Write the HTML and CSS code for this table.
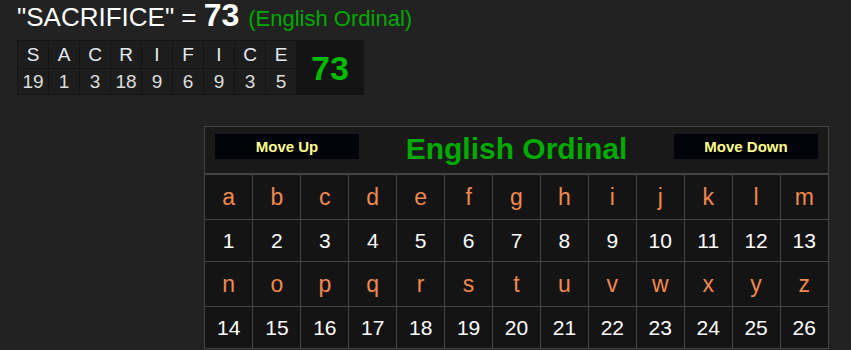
FILE: index.html
```html
<!DOCTYPE html>
<html lang="en">
<head>
  <meta charset="UTF-8" />
  <title>SACRIFICE = 73 | Gematria</title>
  <link rel="stylesheet" href="styles.css">
</head>
<body>
  <div class="page">
    <h1 class="phrase-title">
      <span class="phrase">"SACRIFICE" = </span><span class="phrase-total">73</span>
      <span class="cipher-label">(English Ordinal)</span>
    </h1>

    <table class="breakdown" id="breakdown">
      <tr class="bd-letters"></tr>
      <tr class="bd-values"></tr>
    </table>

    <div class="cipher-panel">
      <div class="cipher-head">
        <button class="move-btn">Move Up</button>
        <span class="cipher-name">English Ordinal</span>
        <button class="move-btn">Move Down</button>
      </div>
      <table class="cipher-grid" id="cipher-grid"></table>
    </div>
  </div>

  <script>
    const word = 'SACRIFICE';
    const ordinal = ch => ch.toLowerCase().charCodeAt(0) - 96;

    // Letter / value breakdown for the phrase
    const bd = document.getElementById('breakdown');
    const letterRow = bd.querySelector('.bd-letters');
    const valueRow = bd.querySelector('.bd-values');
    let total = 0;
    for (const ch of word) {
      const v = ordinal(ch);
      total += v;
      letterRow.insertAdjacentHTML('beforeend', `<td>${ch}</td>`);
      valueRow.insertAdjacentHTML('beforeend', `<td>${v}</td>`);
    }
    letterRow.insertAdjacentHTML('beforeend', `<td class="bd-total" rowspan="2">${total}</td>`);

    // a-z grid, two blocks of 13
    const grid = document.getElementById('cipher-grid');
    for (let start = 0; start < 26; start += 13) {
      let letters = '<tr class="row-letters">';
      let values = '<tr class="row-values">';
      for (let i = start; i < start + 13; i++) {
        letters += `<td>${String.fromCharCode(97 + i)}</td>`;
        values += `<td>${i + 1}</td>`;
      }
      grid.insertAdjacentHTML('beforeend', letters + '</tr>' + values + '</tr>');
    }
  </script>
</body>
</html>
```

FILE: styles.css
```css
body {
  margin: 0;
  background-color: #222;
  font-family: 'Liberation Sans', Arial, sans-serif;
  color: #fff;
}

.page {
  padding: 0 0 0 17px;
}

.phrase-title {
  margin: 0;
  height: 35px;
  padding-top: 1px;
  box-sizing: border-box;
  font-weight: normal;
  line-height: 28px;
  white-space: nowrap;
}

.phrase {
  font-size: 26px;
}

.phrase-total {
  display: inline-block;
  font-size: 32px;
  line-height: 24px;
  font-weight: bold;
}

.cipher-label {
  font-size: 22px;
  color: #0a0;
}

/* phrase breakdown */
.breakdown {
  margin-top: 5px;
  border-collapse: separate;
  border-spacing: 1px;
  background-color: #141414;
}

.breakdown td {
  width: 30px;
  padding: 0;
  text-align: center;
  background-color: #1d1d1d;
  font-size: 19px;
  color: #e6eaf2;
}

.bd-letters td {
  height: 26px;
  padding-top: 1px;
}

.bd-values td {
  height: 25px;
  color: #ddd;
}

.breakdown td.bd-total {
  width: 66px;
  background-color: #141414;
  color: #0b0;
  font-size: 34px;
  font-weight: bold;
}

/* cipher panel */
.cipher-panel {
  margin: 31px 0 0 187px;
  width: 623px;
  border: 1px solid #444;
  border-bottom: none;
  background-color: #191919;
}

.cipher-head {
  display: flex;
  align-items: center;
  justify-content: space-between;
  height: 46px;
  padding: 0 10px;
  border-bottom: 2px solid #444;
}

.move-btn {
  width: 144px;
  height: 25px;
  margin-top: -7px;
  border: none;
  background-color: #03030b;
  color: #ffff8c;
  font-family: 'Liberation Sans', Arial, sans-serif;
  font-size: 15px;
  font-weight: bold;
}

.cipher-name {
  color: #0a0;
  font-size: 30px;
  font-weight: bold;
  margin-top: -3px;
}

.cipher-grid {
  width: 100%;
  border-collapse: collapse;
  table-layout: fixed;
}

.cipher-grid td {
  border: 1px solid #444;
  text-align: center;
  padding: 0;
  background-color: #141414;
}

.cipher-grid tr:first-child td {
  border-top: none;
}

.cipher-grid td:first-child {
  border-left: none;
}

.cipher-grid td:last-child {
  border-right: none;
}

.row-letters td {
  height: 44px;
  color: #f0884f;
  font-size: 23px;
}

.row-values td {
  height: 41px;
  font-size: 21px;
  color: #fff;
}
```
